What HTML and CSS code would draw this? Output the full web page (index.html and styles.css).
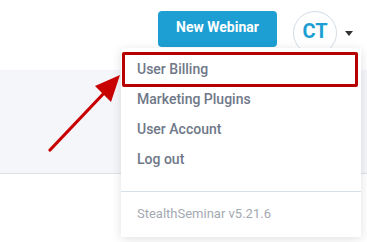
FILE: index.html
```html
<!DOCTYPE html>
<html lang="en">
<head>
    <meta charset="UTF-8">
    <meta name="viewport" content="width=device-width, initial-scale=1.0">
    <link rel="stylesheet" href="styles.css">
    <title>StealthSeminar</title>
</head>
<body>
    <header class="topbar">
        <button class="btn-new">New Webinar</button>
        <div class="avatar">CT</div>
        <span class="caret"></span>
    </header>

    <div class="band"></div>

    <!-- user menu, opened -->
    <div class="user-menu">
        <ul class="menu-list">
            <li>User Billing</li>
            <li>Marketing Plugins</li>
            <li>User Account</li>
            <li>Log out</li>
        </ul>
        <div class="menu-footer">StealthSeminar v5.21.6</div>
    </div>

    <!-- annotation -->
    <div class="highlight"></div>
    <svg class="arrow" width="80" height="85" viewBox="0 0 80 85">
        <line x1="2" y1="81" x2="58" y2="22" stroke="#c80000" stroke-width="3.2" stroke-linecap="round"/>
        <polygon points="72,6 47,17 63,33" fill="#c80000"/>
    </svg>
</body>
</html>
```

FILE: styles.css
```css
body {
    margin: 0;
    font-family: Roboto, 'Liberation Sans', sans-serif;
    background-color: #fff;
    position: relative;
    height: 242px;
    overflow: hidden;
}

.topbar {
    height: 70px;
    display: flex;
    justify-content: flex-end;
    align-items: flex-start;
    padding: 11px 14px 0 0;
    box-sizing: border-box;
}

.btn-new {
    width: 119px;
    height: 36px;
    border: none;
    border-radius: 4px;
    background-color: #1d9fd4;
    color: #fff;
    font-family: Roboto, 'Liberation Sans', sans-serif;
    font-size: 14px;
    font-weight: 700;
    padding: 0 0 5px;
}

.avatar {
    width: 42px;
    height: 42px;
    margin-left: 16px;
    border: 1px solid #d3dde6;
    border-radius: 50%;
    display: flex;
    justify-content: center;
    align-items: center;
    color: #1d9fd4;
    font-size: 20px;
    font-weight: 700;
    padding-bottom: 4px;
    box-sizing: content-box;
    height: 38px;
}

.caret {
    margin: 20px 0 0 8px;
    width: 0;
    height: 0;
    border-left: 4.5px solid transparent;
    border-right: 4.5px solid transparent;
    border-top: 5px solid #333;
}

.band {
    height: 103px;
    background-color: #f5f6fa;
    border-bottom: 1px solid #dfe2e8;
}

.user-menu {
    position: absolute;
    left: 121px;
    top: 48px;
    width: 240px;
    height: 189px;
    background-color: #fff;
    box-shadow: 0 2px 10px rgba(0, 0, 0, 0.12);
}

.menu-list {
    list-style: none;
    margin: 0;
    padding: 6px 0 0;
    height: 137px;
    border-bottom: 1px solid #d8e0e8;
}

.menu-list li {
    height: 30px;
    line-height: 30px;
    padding-left: 16px;
    color: #6f7888;
    font-size: 14px;
    font-weight: 500;
}

.menu-footer {
    padding: 13px 0 0 16px;
    color: #a3a9b2;
    font-size: 13px;
    line-height: 18px;
}

.highlight {
    position: absolute;
    left: 122px;
    top: 52px;
    width: 230px;
    height: 29px;
    border: 3px solid #b80000;
    border-radius: 2px;
}

.arrow {
    position: absolute;
    left: 48px;
    top: 69px;
}
```
